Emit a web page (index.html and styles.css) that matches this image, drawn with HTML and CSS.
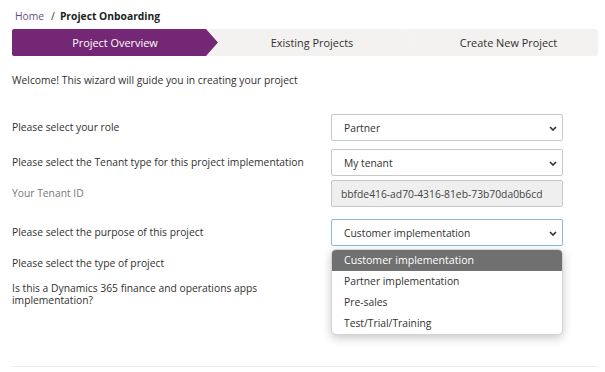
FILE: index.html
```html
<!DOCTYPE html>
<html>
<head>
<meta charset="utf-8">
<link rel="stylesheet" href="styles.css">
</head>
<body>
<div class="page">
  <nav class="crumbs"><a class="crumb-link">Home</a><span class="crumb-sep">/</span><span class="crumb-current">Project Onboarding</span></nav>
  <div class="steps">
    <div class="step step-first step-active">Project Overview</div>
    <div class="step step-mid">Existing Projects</div>
    <div class="step step-last">Create New Project</div>
  </div>
  <p class="welcome">Welcome! This wizard will guide you in creating your project</p>
  <div class="form">
    <div class="row">
      <div class="label">Please select your role</div>
      <div class="field select"><span>Partner</span><svg class="chev" width="8" height="5" viewBox="0 0 8 5"><polyline points="1,1 4,4 7,1" fill="none" stroke="#323130" stroke-width="1.6"/></svg></div>
    </div>
    <div class="row gap-8">
      <div class="label">Please select the Tenant type for this project implementation</div>
      <div class="field select"><span>My tenant</span><svg class="chev" width="8" height="5" viewBox="0 0 8 5"><polyline points="1,1 4,4 7,1" fill="none" stroke="#323130" stroke-width="1.6"/></svg></div>
    </div>
    <div class="row">
      <div class="label label-muted">Your Tenant ID</div>
      <div class="field input-disabled"><span>bbfde416-ad70-4316-81eb-73b70da0b6cd</span></div>
    </div>
    <div class="row gap-12">
      <div class="label">Please select the purpose of this project</div>
      <div class="field select select-focus"><span>Customer implementation</span><svg class="chev" width="8" height="5" viewBox="0 0 8 5"><polyline points="1,1 4,4 7,1" fill="none" stroke="#323130" stroke-width="1.6"/></svg>
        <ul class="menu">
          <li class="menu-item menu-item-active">Customer implementation</li>
          <li class="menu-item">Partner implementation</li>
          <li class="menu-item">Pre-sales</li>
          <li class="menu-item">Test/Trial/Training</li>
        </ul>
      </div>
    </div>
    <div class="row">
      <div class="label">Please select the type of project</div>
      <div class="field"></div>
    </div>
    <div class="row">
      <div class="label label-wrap">Is this a Dynamics 365 finance and operations apps implementation?</div>
      <div class="field"></div>
    </div>
  </div>
  <div class="divider"></div>
</div>
</body>
</html>
```
FILE: styles.css
```css
* { box-sizing: border-box; }
html, body { margin: 0; padding: 0; background: #fff; }
body {
  font-family: "Open Sans", "Noto Sans", sans-serif;
  font-size: 10.3px;
  color: #323130;
}
.page { padding: 8px 7px 0 12px; }
.crumbs {
  height: 16px;
  line-height: 16px;
  font-size: 10.3px;
  padding-left: 3px;
  display: flex;
}
.crumb-link { color: #6c4f80; }
.crumb-sep { margin: 0 5px 0 7px; color: #323130; }
.crumb-current { font-weight: 700; color: #201f1e; }

.steps {
  margin-top: 5px;
  height: 27px;
  display: flex;
  font-size: 10.9px;
}
.step {
  height: 27px;
  display: flex;
  align-items: center;
  justify-content: center;
  background: #f3f2f1;
  color: #323130;
}
.step-active { background: #742774; color: #fff; }
.step-first {
  width: 206px;
  border-radius: 2px 0 0 2px;
  clip-path: polygon(0 0, calc(100% - 12px) 0, 100% 50%, calc(100% - 12px) 100%, 0 100%);
}
.step-mid {
  width: 210px;
  margin-left: -11px;
  clip-path: polygon(0 0, calc(100% - 12px) 0, 100% 50%, calc(100% - 12px) 100%, 0 100%, 12px 50%);
}
.step-last {
  flex: 1;
  margin-left: -12px;
  padding-left: 14px;
  border-radius: 0 3px 3px 0;
  clip-path: polygon(0 0, 100% 0, 100% 100%, 0 100%, 12px 50%);
}

.welcome {
  margin: 16px 0 0;
  line-height: 16px;
}
.form { margin-top: 26px; }
.row {
  display: flex;
  align-items: center;
  height: 27px;
  margin-top: 4px;
}
.row:first-child { margin-top: 0; }
.row.gap-8 { margin-top: 8px; }
.row.gap-12 { margin-top: 12px; }
.label { width: 319px; flex: none; line-height: 14px; margin-top: -2px; }
.label-muted { color: #797775; }
.label-wrap { width: 305px; margin-right: 14px; line-height: 12px; }
.field {
  width: 232px;
  height: 27px;
  position: relative;
  display: flex;
  align-items: center;
}
.select {
  border: 1px solid #c8c8c8;
  border-radius: 2px;
  padding-left: 12px;
  background: #fff;
}
.select-focus { border-color: #8fb6e0; }
.chev { position: absolute; right: 5px; top: 11px; }
.input-disabled {
  border: 1px solid #c8c8c8;
  border-radius: 2px;
  background: #efefef;
  padding-left: 9px;
  color: #444;
}
.menu {
  position: absolute;
  left: -1px;
  top: 29px;
  width: 232px;
  margin: 0;
  padding: 0;
  list-style: none;
  background: #fff;
  border: 1px solid #d4d4d4;
  border-radius: 5px;
  overflow: hidden;
  box-shadow: 0 3px 10px rgba(0, 0, 0, 0.22);
  z-index: 5;
}
.menu-item {
  height: 21px;
  line-height: 21px;
  padding-left: 12px;
  color: #323130;
}
.menu-item-active {
  background: #707070;
  color: #fff;
  font-size: 10.6px;
}
.divider {
  margin-top: 58px;
  height: 1px;
  background: #ebebeb;
}
```
